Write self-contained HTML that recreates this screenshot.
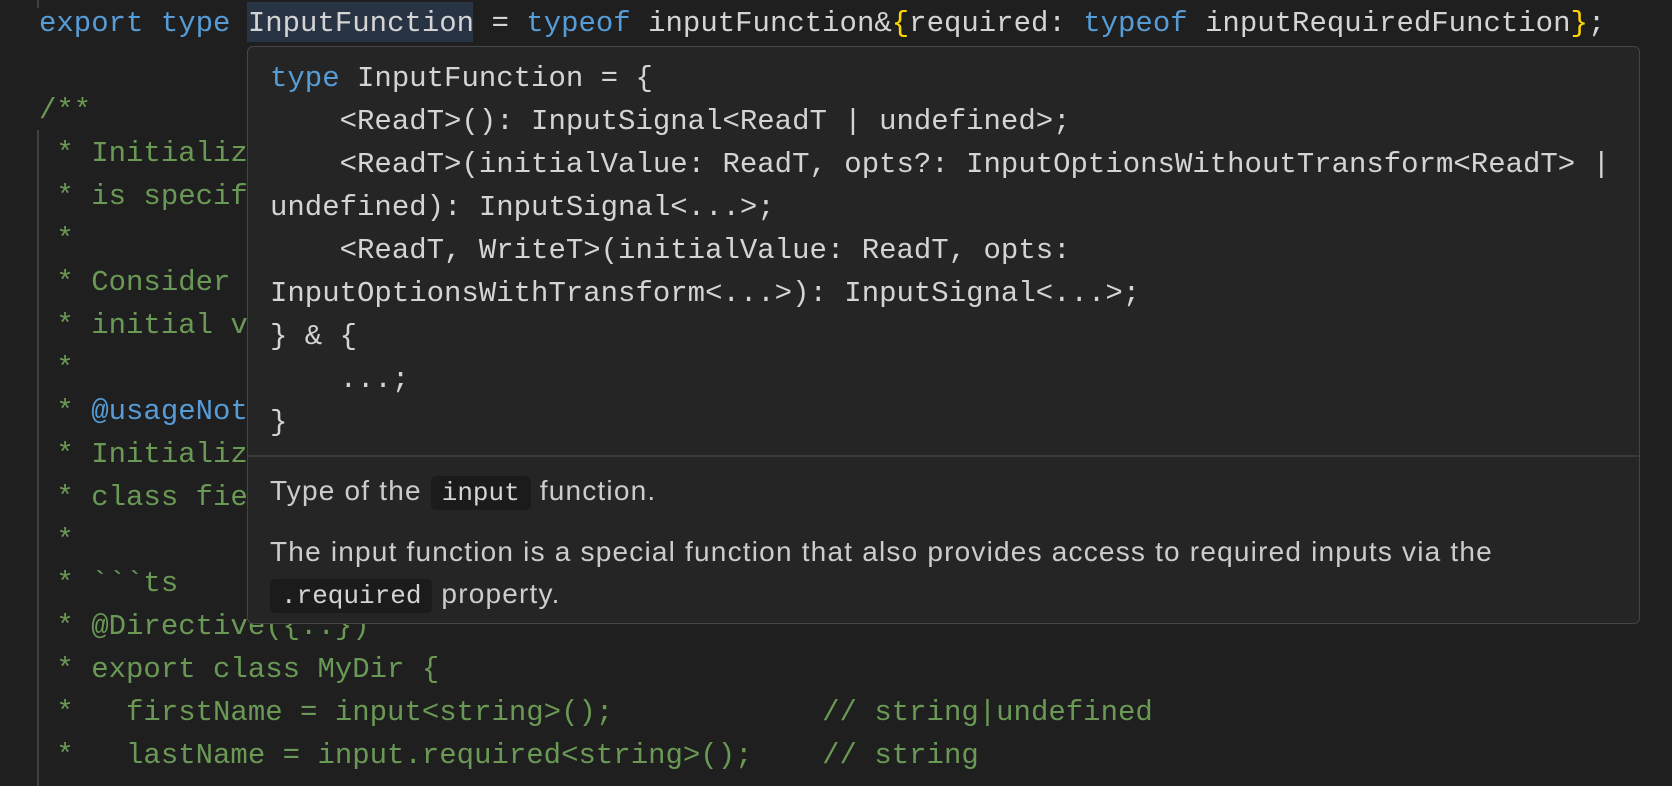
<!DOCTYPE html>
<html><head><meta charset="utf-8"><style>
html,body{margin:0;padding:0;width:1672px;height:786px;overflow:hidden;background:#1f1f1f;}
.m{font-family:"Liberation Mono",monospace;font-size:29px;white-space:pre;position:absolute;line-height:43px;color:#d4d4d4;}
.k{color:#569cd6}.y{color:#ffd700}.g{color:#6a9955}
#tip{position:absolute;left:247px;top:46px;width:1393px;height:578px;background:#252526;border:1.5px solid #454545;border-radius:6px;box-sizing:border-box;}
.sep{position:absolute;left:0;right:0;top:408px;height:2px;background:#3a3a3a;}
.s{position:absolute;font-family:"Liberation Sans",sans-serif;font-size:28px;letter-spacing:1.2px;color:#cccccc;white-space:pre;line-height:42px;}
.c{font-family:"Liberation Mono",monospace;font-size:26px;letter-spacing:0;background:#1b1b1b;border-radius:5px;padding:2px 11px;color:#d4d4d4;}
</style></head><body>
<div style="position:absolute;left:247px;top:2px;width:226px;height:40px;background:#283443"></div>
<div style="position:absolute;left:37px;top:0;width:2px;height:8px;background:#404040"></div>
<div style="position:absolute;left:37px;top:130px;width:2px;height:656px;background:#404040"></div>
<div class="m" style="left:39px;top:2px"><span class="k">export type</span> InputFunction = <span class="k">typeof</span> inputFunction&amp;<span class="y">{</span>required: <span class="k">typeof</span> inputRequiredFunction<span class="y">}</span>;</div>
<div class="m g" style="left:39px;top:89px">/**
 * Initializes an input of type &#96;T&#96; with an initial value
 * is specified by the parent.
 *
 * Consider using &#96;input.required&#96; for inputs that don't need an
 * initial value.
 *
 * <span class="k">@usageNotes</span>
 * Initialize an input in your directive or component by declaring a
 * class field and initializing it with the &#96;input()&#96; function.
 *
 * &#96;&#96;&#96;ts
 * @Directive({..})
 * export class MyDir {
 *   firstName = input&lt;string&gt;();            // string|undefined
 *   lastName = input.required&lt;string&gt;();    // string</div>
<div id="tip">
<div class="m" style="left:22px;top:10px"><span class="k">type</span> InputFunction = {
    &lt;ReadT&gt;(): InputSignal&lt;ReadT | undefined&gt;;
    &lt;ReadT&gt;(initialValue: ReadT, opts?: InputOptionsWithoutTransform&lt;ReadT&gt; |
undefined): InputSignal&lt;...&gt;;
    &lt;ReadT, WriteT&gt;(initialValue: ReadT, opts:
InputOptionsWithTransform&lt;...&gt;): InputSignal&lt;...&gt;;
} &amp; {
    ...;
}</div>
<div class="sep"></div>
<div class="s" style="left:22px;top:423px">Type of the <span class="c">input</span> function.</div>
<div class="s" style="left:22px;top:484px">The input function is a special function that also provides access to required inputs via the
<span class="c">.required</span> property.</div>
</div>
</body></html>
